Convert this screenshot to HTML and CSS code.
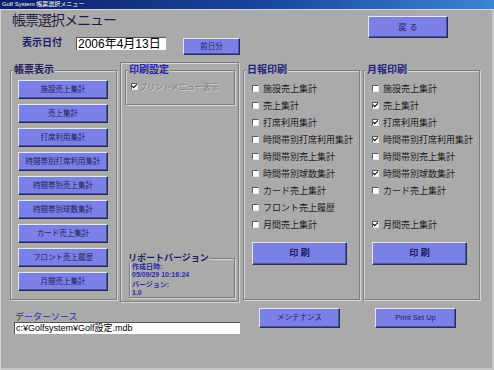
FILE: index.html
```html
<!DOCTYPE html>
<html lang="ja">
<head>
    <meta charset="UTF-8">
    <meta name="viewport" content="width=device-width, initial-scale=1.0">
    <title>帳票選択メニュー</title>
    <link rel="stylesheet" href="styles.css">
</head>
<body>
    <div class="window">
        <div class="titlebar">Golf System 帳票選択メニュー</div>

        <div class="header">
            <div class="header-left">
                <h1 class="title">帳票選択メニュー</h1>
                <div class="date-row">
                    <span class="date-label">表示日付</span>
                    <div class="date-box">2006年4月13日</div>
                    <button class="btn btn-prev">前日分</button>
                </div>
            </div>
            <button class="btn btn-back">戻 る</button>
        </div>

        <div class="main">
            <fieldset class="group group-reports">
                <legend>帳票表示</legend>
                <div class="report-list">
                    <button class="btn btn-report">施設売上集計</button>
                    <button class="btn btn-report">売上集計</button>
                    <button class="btn btn-report">打席利用集計</button>
                    <button class="btn btn-report">時間帯別打席利用集計</button>
                    <button class="btn btn-report">時間帯別売上集計</button>
                    <button class="btn btn-report">時間帯別球数集計</button>
                    <button class="btn btn-report">カード売上集計</button>
                    <button class="btn btn-report">フロント売上履歴</button>
                    <button class="btn btn-report">月間売上集計</button>
                </div>
            </fieldset>

            <div class="middle">
                <fieldset class="group group-settings">
                    <legend>印刷設定</legend>
                    <div class="settings-body">
                        <label class="check disabled"><span class="cb on"></span>プリントメニュー表示</label>
                    </div>
                </fieldset>
                <fieldset class="group group-version">
                    <legend>リポートバージョン</legend>
                    <div class="version-info">
                        <div>作成日時:</div>
                        <div>05/09/29 10:16:24</div>
                        <div class="version-gap">バージョン:</div>
                        <div>1.0</div>
                    </div>
                </fieldset>
            </div>

            <fieldset class="group group-print group-daily">
                <legend>日報印刷</legend>
                <div class="check-list">
                    <label class="check"><span class="cb"></span>施設売上集計</label>
                    <label class="check"><span class="cb"></span>売上集計</label>
                    <label class="check"><span class="cb"></span>打席利用集計</label>
                    <label class="check"><span class="cb"></span>時間帯別打席利用集計</label>
                    <label class="check"><span class="cb"></span>時間帯別売上集計</label>
                    <label class="check"><span class="cb"></span>時間帯別球数集計</label>
                    <label class="check"><span class="cb"></span>カード売上集計</label>
                    <label class="check"><span class="cb"></span>フロント売上履歴</label>
                    <label class="check"><span class="cb"></span>月間売上集計</label>
                </div>
                <button class="btn btn-print">印 刷</button>
            </fieldset>

            <fieldset class="group group-print group-monthly">
                <legend>月報印刷</legend>
                <div class="check-list">
                    <label class="check"><span class="cb"></span>施設売上集計</label>
                    <label class="check"><span class="cb on"></span>売上集計</label>
                    <label class="check"><span class="cb on"></span>打席利用集計</label>
                    <label class="check"><span class="cb on"></span>時間帯別打席利用集計</label>
                    <label class="check"><span class="cb"></span>時間帯別売上集計</label>
                    <label class="check"><span class="cb on"></span>時間帯別球数集計</label>
                    <label class="check"><span class="cb"></span>カード売上集計</label>
                    <div class="check"></div>
                    <label class="check"><span class="cb on"></span>月間売上集計</label>
                </div>
                <button class="btn btn-print">印 刷</button>
            </fieldset>
        </div>

        <div class="footer">
            <div class="source">
                <div class="source-label">データーソース</div>
                <div class="source-box">c:¥Golfsystem¥Golf設定.mdb</div>
            </div>
            <button class="btn btn-maint">メンテナンス</button>
            <button class="btn btn-setup">Print Set Up</button>
        </div>
    </div>
</body>
</html>
```

FILE: styles.css
```css
/* General Styles */
* {
    box-sizing: border-box;
}

body {
    margin: 0;
    font-family: "Liberation Sans", "Noto Sans CJK JP", sans-serif;
    background: #aaaaaa;
}

.window {
    width: 494px;
    height: 370px;
    background: #aaaaaa;
    box-shadow: inset 1px 0 0 #d4d4d4, inset -2px -2px 0 #c6c6c6;
    overflow: hidden;
}

/* Title bar */
.titlebar {
    height: 10px;
    padding-left: 2px;
    background: linear-gradient(to right, #0a1f66, #1a47a0 55%, #3c84d4);
    border-bottom: 1px solid #d8d8d8;
    color: #ffffff;
    font-size: 6px;
    line-height: 9px;
    white-space: nowrap;
}

/* Header */
.header {
    height: 52px;
    display: flex;
    justify-content: space-between;
}

.title {
    margin: 3px 0 0 12px;
    font-size: 14px;
    line-height: 15px;
    font-weight: normal;
    letter-spacing: -1px;
    color: #1e1e3c;
}

.date-row {
    display: flex;
    align-items: flex-start;
    margin-top: 9px;
}

.date-label {
    margin-left: 22px;
    font-size: 10px;
    line-height: 12px;
    font-weight: bold;
    color: #1c1c6e;
}

.date-box {
    width: 90px;
    height: 13px;
    margin-left: 14px;
    padding-left: 1px;
    background: #ffffff;
    border-top: 1px solid #555555;
    border-left: 1px solid #555555;
    font-size: 12px;
    line-height: 12px;
    color: #000000;
}

/* Buttons */
.btn {
    padding: 0;
    background: #7a80e6;
    border: 1px solid;
    border-color: #e4e6ff #2c2c50 #2c2c50 #e4e6ff;
    box-shadow: inset -1px -1px 0 #4c52a8;
    font-family: "Liberation Sans", "Noto Sans CJK JP", sans-serif;
    font-size: 7.5px;
    line-height: 1;
    color: #1e1e5c;
    white-space: nowrap;
}

.btn-prev {
    width: 57px;
    height: 17px;
    margin: 1px 0 0 17px;
}

.btn-back {
    width: 80px;
    height: 22px;
    margin: 6px 46px 0 0;
    font-size: 8.5px;
}

/* Group boxes */
.group {
    margin: 0;
    padding: 0;
    min-width: 0;
    border: 1px solid #7c7c7c;
    box-shadow: inset 1px 1px 0 #d6d6d6, 1px 1px 0 #d6d6d6;
}

.group legend {
    margin-left: 2px;
    padding: 0 1px;
    background: #aaaaaa;
    font-size: 10px;
    line-height: 10px;
    font-weight: bold;
    color: #24247c;
}

.main {
    display: flex;
    align-items: flex-start;
    height: 240px;
    padding-left: 10px;
}

.group-reports {
    width: 107px;
    height: 235px;
    margin-top: 3px;
}

.group-reports legend {
    color: #20205c;
}

.report-list {
    display: flex;
    flex-direction: column;
    gap: 5px;
    padding: 5px 0 0 7px;
}

.btn-report {
    width: 90px;
    height: 19px;
}

/* Middle column */
.middle {
    width: 119px;
    height: 240px;
    margin-left: 3px;
    padding: 2px 3px 3px 4px;
    display: flex;
    flex-direction: column;
    justify-content: space-between;
    border: 1px solid #7c7c7c;
    box-shadow: inset 1px 1px 0 #d6d6d6, 1px 1px 0 #d6d6d6;
}

.group-settings {
    width: 110px;
    height: 40px;
}

.group-settings legend {
    color: #2626a8;
}

.settings-body {
    padding: 6px 0 0 5px;
}

.group-version {
    width: 106px;
    height: 45px;
    margin-left: 4px;
}

.group-version legend {
    margin-left: -2px;
    padding: 0;
    font-size: 9px;
    color: #20205e;
}

.version-info {
    padding: 0 0 0 2px;
    font-size: 7px;
    line-height: 7.5px;
    font-weight: bold;
    color: #2a2aa8;
}

.version-gap {
    margin-top: 3px;
}

/* Checkboxes */
.check {
    display: flex;
    align-items: center;
    height: 17px;
    font-size: 9px;
    color: #1c1c1c;
    white-space: nowrap;
}

.cb {
    position: relative;
    flex: none;
    width: 7px;
    height: 7px;
    margin-right: 4px;
    background: #ffffff;
    border: 1px solid;
    border-color: #5a5a5a #e8e8e8 #e8e8e8 #5a5a5a;
}

.cb.on::after {
    content: "";
    position: absolute;
    left: 1px;
    top: -1px;
    width: 2px;
    height: 4px;
    border: solid #000000;
    border-width: 0 1.5px 1.5px 0;
    transform: rotate(45deg);
}

.check.disabled {
    height: 10px;
    font-size: 8px;
    color: #7c7c7c;
    text-shadow: 1px 1px 0 #d2d2d2;
}

.check.disabled .cb {
    margin-right: 1px;
}

/* Print groups */
.group-print {
    width: 117px;
    height: 235px;
    margin-top: 3px;
}

.group-daily {
    margin-left: 4px;
}

.group-monthly {
    margin-left: 3px;
}

.check-list {
    padding: 5px 0 0 8px;
}

.btn-print {
    width: 95px;
    height: 23px;
    margin: 9px 0 0 8px;
    font-size: 9px;
    font-weight: bold;
    color: #1a1a5a;
}

/* Footer */
.footer {
    display: flex;
    align-items: flex-start;
    height: 68px;
}

.source {
    width: 226px;
    margin-left: 14px;
    padding-top: 10px;
}

.source-label {
    padding-left: 1px;
    font-size: 9px;
    line-height: 10px;
    color: #2a2ab0;
}

.source-box {
    height: 12px;
    padding-left: 1px;
    background: #ffffff;
    border-top: 1px solid #555555;
    border-left: 1px solid #555555;
    font-size: 9px;
    line-height: 11px;
    color: #000000;
    white-space: nowrap;
}

.btn-maint {
    width: 81px;
    height: 20px;
    margin: 6px 0 0 19px;
}

.btn-setup {
    width: 81px;
    height: 20px;
    margin: 6px 0 0 35px;
}
```
